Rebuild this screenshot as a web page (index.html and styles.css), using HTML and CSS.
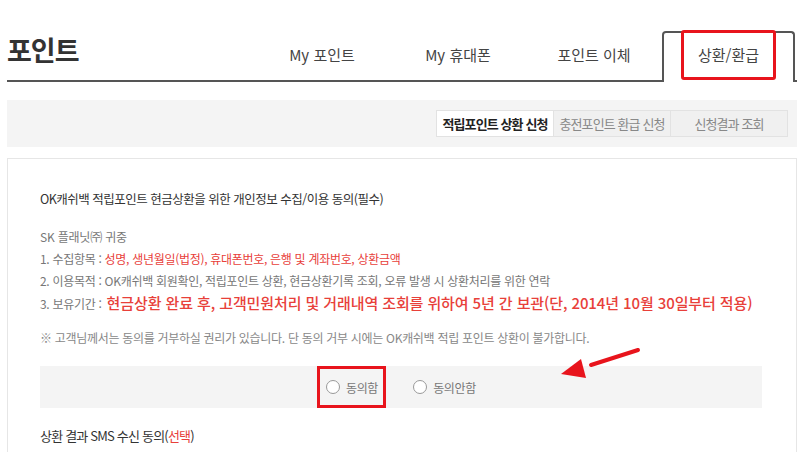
FILE: index.html
```html
<!DOCTYPE html>
<html lang="ko">
<head>
  <meta charset="UTF-8">
  <title>포인트 - 상환/환급</title>
  <meta name="viewport" content="width=device-width, initial-scale=1">
  <link rel="stylesheet" href="styles.css">
</head>
<body>

<div class="wrap">
  <header class="top">
    <h1>포인트</h1>
    <ul class="tabs">
      <li>My 포인트</li>
      <li>My 휴대폰</li>
      <li>포인트 이체</li>
      <li class="on"><span class="mark">상환/환급</span></li>
    </ul>
  </header>

  <div class="subbar">
    <ul class="subtabs">
      <li class="on">적립포인트 상환 신청</li>
      <li>충전포인트 환급 신청</li>
      <li>신청결과 조회</li>
    </ul>
  </div>

  <section class="box">
    <h2>OK캐쉬백 적립포인트 현금상환을 위한 개인정보 수집/이용 동의(필수)</h2>

    <p class="to">SK 플래닛㈜ 귀중</p>
    <ol class="terms">
      <li>1. 수집항목 : <em>성명, 생년월일(법정), 휴대폰번호, 은행 및 계좌번호, 상환금액</em></li>
      <li>2. 이용목적 : OK캐쉬백 회원확인, 적립포인트 상환, 현금상환기록 조회, 오류 발생 시 상환처리를 위한 연락</li>
      <li>3. 보유기간 : <strong>현금상환 완료 후, 고객민원처리 및 거래내역 조회를 위하여 5년 간 보관(단, 2014년 10월 30일부터 적용)</strong></li>
    </ol>
    <p class="note">※ 고객님께서는 동의를 거부하실 권리가 있습니다. 단 동의 거부 시에는 OK캐쉬백 적립 포인트 상환이 불가합니다.</p>

    <div class="agree">
      <label class="radio mark"><i></i>동의함</label>
      <label class="radio"><i></i>동의안함</label>
      <!-- 화살표 -->
      <svg class="arrow" width="90" height="40" viewBox="0 0 90 40">
        <line x1="82" y1="6" x2="35" y2="21" stroke="#e8141c" stroke-width="4" stroke-linecap="round"/>
        <polygon points="5,30 25,15 30,34" fill="#e8141c"/>
      </svg>
    </div>

    <h2 class="sms">상환 결과 SMS 수신 동의(<em>선택</em>)</h2>
  </section>
</div>

</body>
</html>
```

FILE: styles.css
```css
body {
  margin: 0;
  background: #fff;
  font-family: "Noto Sans CJK KR", "Noto Sans", sans-serif;
  color: #333;
}

ul, ol {
  list-style: none;
  margin: 0;
  padding: 0;
}

.wrap {
  margin: 0 3px 0 7px;
  height: 452px;
  overflow: hidden;
}

.top {
  display: flex;
  align-items: flex-end;
  justify-content: space-between;
  height: 80px;
  border-bottom: 2px solid #555;
}

.top h1 {
  margin: 0 0 13px;
  font-size: 27px;
  font-weight: 700;
  color: #333;
  letter-spacing: -1px;
  line-height: 34px;
}

.tabs {
  display: flex;
  margin-bottom: -2px;
  margin-right: 2px;
}

.tabs li {
  width: 136px;
  height: 47px;
  display: flex;
  align-items: center;
  justify-content: center;
  font-size: 15px;
  font-weight: 400;
  color: #444;
  padding-bottom: 1px;
}

.tabs li.on {
  width: 129px;
  border: 2px solid #555;
  border-bottom: none;
  border-radius: 4px 4px 0 0;
  background: #fff;
  height: 48px;
  position: relative;
}

.tabs .mark {
  border: 3px solid #e8141c;
  border-radius: 3px;
  padding: 11px 14px 12px;
  margin-top: -5px;
}

.subbar {
  margin-top: 18px;
  height: 47px;
  background: #f4f4f4;
  display: flex;
  align-items: center;
  justify-content: flex-end;
  padding-right: 9px;
}

.subtabs {
  display: flex;
  border: 1px solid #e2e2e2;
}

.subtabs li {
  width: 116px;
  height: 25px;
  line-height: 25px;
  text-align: center;
  font-size: 13px;
  color: #888;
  background: #f0f0f0;
  letter-spacing: -0.9px;
}

.subtabs li + li {
  border-left: 1px solid #e2e2e2;
}

.subtabs li.on {
  background: #fff;
  color: #222;
  font-weight: 700;
}

.box {
  margin-top: 11px;
  border: 1px solid #e6e6e6;
  border-bottom: none;
  padding: 28px 34px 0 32px;
  height: 300px;
}

.box h2 {
  margin: 0;
  font-size: 12.5px;
  font-weight: 400;
  color: #333;
  line-height: 24px;
  letter-spacing: -0.5px;
}

.box em {
  font-style: normal;
  color: #e8403a;
}

.to {
  margin: 15px 0 0;
  font-size: 12px;
  color: #777;
  line-height: 22px;
  letter-spacing: -0.2px;
}

.terms li {
  font-size: 12px;
  color: #777;
  line-height: 22px;
  white-space: nowrap;
  letter-spacing: -0.3px;
}

.terms strong {
  font-size: 15px;
  font-weight: 500;
  color: #e8403a;
  letter-spacing: -0.1px;
  margin-left: 2px;
}

.note {
  margin: 12px 0 0;
  font-size: 12px;
  color: #888;
  line-height: 22px;
  letter-spacing: -0.3px;
}

.agree {
  position: relative;
  margin-top: 17px;
  height: 42px;
  background: #f4f4f4;
  display: flex;
  align-items: center;
  justify-content: center;
  gap: 27px;
}

.radio {
  display: flex;
  align-items: center;
  gap: 6px;
  font-size: 12px;
  color: #777;
  letter-spacing: -0.3px;
}

.radio i {
  width: 12px;
  height: 12px;
  border: 1.5px solid #999;
  border-radius: 50%;
  background: #fff;
}

.agree .mark {
  height: 36px;
  padding: 0 5px 0 6px;
  border: 3px solid #e8141c;
  margin-left: -9px;
}

.arrow {
  position: absolute;
  left: 516px;
  top: -22px;
}

.box h2.sms {
  font-size: 13px;
  margin-top: 16px;
  letter-spacing: -0.8px;
}
```
